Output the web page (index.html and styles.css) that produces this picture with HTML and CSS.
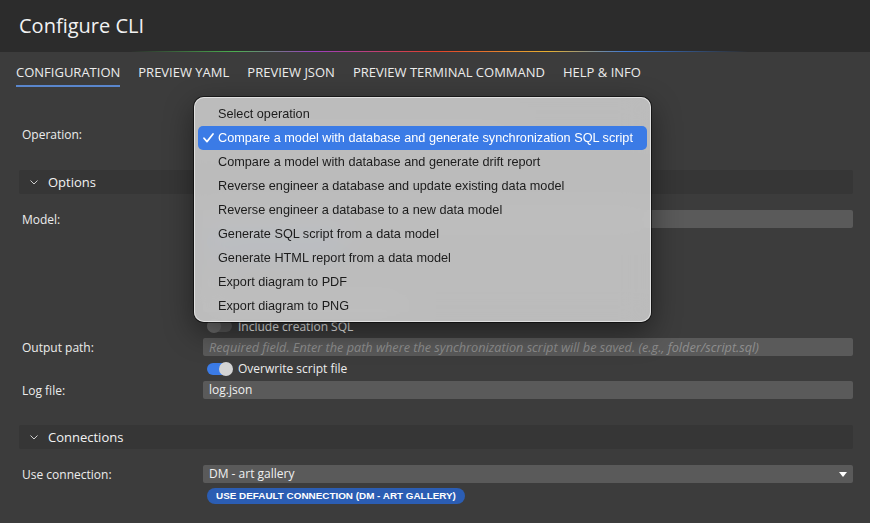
FILE: index.html
```html
<!DOCTYPE html>
<html lang="en">
<head>
    <meta charset="UTF-8">
    <meta name="viewport" content="width=device-width, initial-scale=1.0">
    <title>Configure CLI</title>
    <link rel="stylesheet" href="styles.css">
</head>
<body>
    <!-- Title bar -->
    <div class="titlebar">
        <h1>Configure CLI</h1>
    </div>
    <div class="rainbow"></div>

    <!-- Tabs -->
    <div class="tabs">
        <div class="tab active">CONFIGURATION</div>
        <div class="tab">PREVIEW YAML</div>
        <div class="tab">PREVIEW JSON</div>
        <div class="tab">PREVIEW TERMINAL COMMAND</div>
        <div class="tab">HELP &amp; INFO</div>
    </div>

    <!-- Form -->
    <div class="form">
        <div class="row">
            <label>Operation:</label>
            <div><div class="input op-select"></div></div>
        </div>

        <div class="group options">
            <div class="group-head">
                <svg class="chevron" width="8" height="5" viewBox="0 0 8 5"><polyline points="0.5,0.5 4,4 7.5,0.5" fill="none" stroke="#cfcfcf" stroke-width="1"/></svg>
                <span>Options</span>
            </div>
            <div class="group-body">
                <div class="row">
                    <label>Model:</label>
                    <div class="input"></div>
                </div>
                <div class="row hidden-rows">
                    <span></span>
                    <div class="stack">
                        <div class="pill pill-wide"></div>
                        <div class="toggle-line"><span class="toggle"></span></div>
                        <div class="toggle-line"><span class="toggle"></span></div>
                        <div class="input short"></div>
                    </div>
                </div>
                <div class="row">
                    <span></span>
                    <div class="toggle-line small"><span class="toggle"></span>Include creation SQL</div>
                </div>
                <div class="row">
                    <label>Output path:</label>
                    <div class="input placeholder">Required field. Enter the path where the synchronization script will be saved. (e.g., folder/script.sql)</div>
                </div>
                <div class="row">
                    <span></span>
                    <div class="toggle-line"><span class="toggle on"></span>Overwrite script file</div>
                </div>
                <div class="row">
                    <label>Log file:</label>
                    <div class="input">log.json</div>
                </div>
            </div>
        </div>

        <div class="group">
            <div class="group-head">
                <svg class="chevron" width="8" height="5" viewBox="0 0 8 5"><polyline points="0.5,0.5 4,4 7.5,0.5" fill="none" stroke="#cfcfcf" stroke-width="1"/></svg>
                <span>Connections</span>
            </div>
            <div class="group-body">
                <div class="row">
                    <label>Use connection:</label>
                    <div class="input select">DM - art gallery<span class="arrow"></span></div>
                </div>
                <div class="row btn-row">
                    <span></span>
                    <div class="btn-cell"><button class="pill">USE DEFAULT CONNECTION (DM - ART GALLERY)</button></div>
                </div>
            </div>
        </div>
    </div>

    <!-- Open operation menu -->
    <div class="menu">
        <div class="item">Select operation</div>
        <div class="item selected">
            <svg class="check" width="11" height="10" viewBox="0 0 11 10"><polyline points="1,5.2 4,8.6 10,1" fill="none" stroke="#ffffff" stroke-width="1.7" stroke-linecap="round" stroke-linejoin="round"/></svg>
            Compare a model with database and generate synchronization SQL script
        </div>
        <div class="item">Compare a model with database and generate drift report</div>
        <div class="item">Reverse engineer a database and update existing data model</div>
        <div class="item">Reverse engineer a database to a new data model</div>
        <div class="item">Generate SQL script from a data model</div>
        <div class="item">Generate HTML report from a data model</div>
        <div class="item">Export diagram to PDF</div>
        <div class="item">Export diagram to PNG</div>
    </div>
</body>
</html>
```

FILE: styles.css
```css
/* Basic page styling */
body {
    margin: 0;
    padding: 0;
    background-color: #3c3c3c;
    font-family: "Open Sans", sans-serif;
    color: #e8e8e8;
    height: 523px;
    overflow: hidden;
}

/* Title bar */
.titlebar {
    height: 51px;
    background-color: #2c2c2c;
    display: flex;
    align-items: center;
    padding-left: 19px;
}

.titlebar h1 {
    margin: 0;
    font-size: 20px;
    font-weight: 400;
    color: #f2f2f2;
}

.rainbow {
    height: 1px;
    background: linear-gradient(to right, transparent 15%, #4caf50 27%, #9b3fc0 36%, #e0402a 50%, #e8b030 63%, #3a78d8 72%, transparent 86%);
    background-color: #2c2c2c;
}

/* Tabs */
.tabs {
    display: flex;
    gap: 18px;
    padding-left: 16px;
    height: 35px;
}

.tab {
    padding-top: 12px;
    line-height: 17px;
    height: 21px;
    font-size: 13px;
    color: #ececec;
    border-bottom: 2px solid transparent;
}

.tab.active {
    border-bottom-color: #5a86cc;
}

/* Form */
.form {
    padding: 38px 17px 0 19px;
}

.row {
    display: grid;
    grid-template-columns: 184px 1fr;
    align-items: center;
}

.row label {
    padding-left: 3px;
    font-size: 12px;
    color: #ececec;
}

.input {
    height: 18px;
    line-height: 18px;
    background-color: #5a5a5a;
    border-radius: 2px;
    padding-left: 6px;
    font-size: 12px;
    color: #f0f0f0;
    position: relative;
    white-space: nowrap;
    overflow: hidden;
}

.input.placeholder {
    font-style: italic;
    font-size: 12.7px;
    color: #8e8e8e;
}

.input.short {
    width: 200px;
}

.op-select {
    width: 300px;
}

.arrow {
    position: absolute;
    right: 6px;
    top: 7px;
    width: 0;
    height: 0;
    border-left: 4px solid transparent;
    border-right: 4px solid transparent;
    border-top: 5px solid #ffffff;
}

/* Collapsible groups */
.group {
    margin-top: 26px;
}

.group.options {
    margin-top: 27px;
}

.group-head {
    height: 24px;
    background-color: #363636;
    border-radius: 2px;
    display: flex;
    align-items: center;
    padding-left: 11px;
    font-size: 13px;
    color: #f2f2f2;
}

.chevron {
    margin-right: 10px;
}

.group-body {
    padding-top: 16px;
    display: flex;
    flex-direction: column;
    gap: 6px;
}

.hidden-rows .stack {
    display: flex;
    flex-direction: column;
    gap: 6px;
    height: 80px;
}

/* Toggles */
.toggle-line {
    height: 13px;
    display: flex;
    align-items: center;
    padding-left: 4px;
    font-size: 12px;
    color: #ececec;
}

.toggle-line.small {
    height: 12px;
}

.toggle {
    width: 25px;
    height: 12px;
    border-radius: 6px;
    background-color: #565656;
    margin-right: 6px;
    position: relative;
    flex-shrink: 0;
}

.toggle::after {
    content: "";
    position: absolute;
    left: 0;
    top: -1px;
    width: 14px;
    height: 14px;
    border-radius: 50%;
    background-color: #6a6a6a;
}

.toggle.on {
    background-color: #3b7be6;
}

.toggle.on::after {
    left: auto;
    right: -1px;
    background-color: #d4d4d4;
}

/* Pill buttons */
.btn-cell {
    display: flex;
}

.pill {
    margin-left: 4px;
    height: 16px;
    padding: 0 9px;
    border: none;
    border-radius: 8px;
    background-color: #2b5db3;
    color: #ffffff;
    font-family: "Liberation Sans", Arial, sans-serif;
    font-size: 9.9px;
    font-weight: bold;
    line-height: 16px;
}

.pill-wide {
    width: 120px;
    flex-shrink: 0;
}

.btn-row {
    margin-top: -1px;
}

/* Open dropdown menu */
.menu {
    position: absolute;
    left: 194px;
    top: 97px;
    width: 457px;
    height: 225px;
    box-sizing: border-box;
    padding: 5px 4px 0 4px;
    border-radius: 10px;
    background-color: rgba(202, 202, 202, 0.9);
    backdrop-filter: blur(14px);
    box-shadow: 0 0 0 1px rgba(0, 0, 0, 0.55), inset 0 0 0 1px rgba(255, 255, 255, 0.55), 0 10px 30px rgba(0, 0, 0, 0.45);
    font-family: "Liberation Sans", Arial, sans-serif;
    font-size: 12.7px;
    color: #1c1c1c;
}

.item {
    height: 24px;
    line-height: 24px;
    padding-left: 20px;
    border-radius: 5px;
    position: relative;
    white-space: nowrap;
}

.item.selected {
    background-color: #3b7be6;
    color: #ffffff;
}

.check {
    position: absolute;
    left: 5px;
    top: 7px;
}
```
